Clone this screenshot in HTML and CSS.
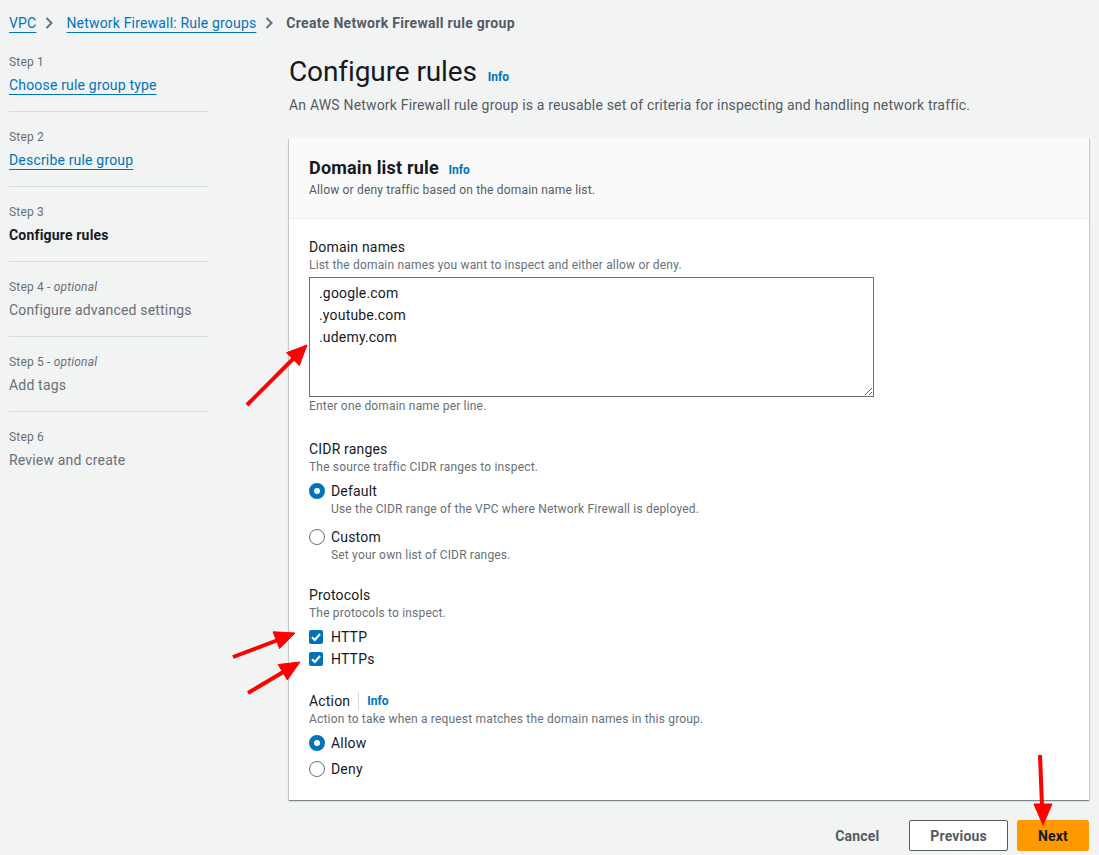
FILE: index.html
```html
<!DOCTYPE html>
<html lang="en">
<head>
<meta charset="utf-8">
<title>Create Network Firewall rule group</title>
<link rel="stylesheet" href="styles.css">
</head>
<body>
<div class="page">
  <nav class="breadcrumbs">
    <a class="crumb-link" href="#">VPC</a>
    <svg class="chev" width="8" height="12" viewBox="0 0 8 12"><polyline points="1.5,1 6.5,6 1.5,11" fill="none" stroke="#687078" stroke-width="2"/></svg>
    <a class="crumb-link" href="#">Network Firewall: Rule groups</a>
    <svg class="chev" width="8" height="12" viewBox="0 0 8 12"><polyline points="1.5,1 6.5,6 1.5,11" fill="none" stroke="#687078" stroke-width="2"/></svg>
    <span class="crumb-current">Create Network Firewall rule group</span>
  </nav>

  <div class="layout">
    <ul class="steps">
      <li class="step">
        <div class="step-label">Step 1</div>
        <a class="step-title link" href="#">Choose rule group type</a>
      </li>
      <li class="step">
        <div class="step-label">Step 2</div>
        <a class="step-title link" href="#">Describe rule group</a>
      </li>
      <li class="step">
        <div class="step-label">Step 3</div>
        <div class="step-title current">Configure rules</div>
      </li>
      <li class="step">
        <div class="step-label">Step 4 - <em>optional</em></div>
        <div class="step-title disabled">Configure advanced settings</div>
      </li>
      <li class="step">
        <div class="step-label">Step 5 - <em>optional</em></div>
        <div class="step-title disabled">Add tags</div>
      </li>
      <li class="step last">
        <div class="step-label">Step 6</div>
        <div class="step-title disabled">Review and create</div>
      </li>
    </ul>

    <main class="main">
      <h1 class="page-title">Configure rules <a class="info" href="#">Info</a></h1>
      <p class="page-desc">An AWS Network Firewall rule group is a reusable set of criteria for inspecting and handling network traffic.</p>

      <section class="container">
        <header class="container-header">
          <h2 class="container-title">Domain list rule <a class="info" href="#">Info</a></h2>
          <div class="container-desc">Allow or deny traffic based on the domain name list.</div>
        </header>
        <div class="container-body">
          <div class="field">
            <div class="field-label">Domain names</div>
            <div class="field-desc">List the domain names you want to inspect and either allow or deny.</div>
            <textarea class="textarea">.google.com
.youtube.com
.udemy.com</textarea>
            <div class="field-hint">Enter one domain name per line.</div>
          </div>

          <div class="field">
            <div class="field-label">CIDR ranges</div>
            <div class="field-desc">The source traffic CIDR ranges to inspect.</div>
            <div class="options">
              <div class="option">
                <span class="radio checked"></span>
                <div>
                  <div class="option-label">Default</div>
                  <div class="option-desc">Use the CIDR range of the VPC where Network Firewall is deployed.</div>
                </div>
              </div>
              <div class="option gap-lg">
                <span class="radio"></span>
                <div>
                  <div class="option-label">Custom</div>
                  <div class="option-desc">Set your own list of CIDR ranges.</div>
                </div>
              </div>
            </div>
          </div>

          <div class="field">
            <div class="field-label">Protocols</div>
            <div class="field-desc">The protocols to inspect.</div>
            <div class="options">
              <div class="option check-option">
                <span class="checkbox"><svg width="14" height="14" viewBox="0 0 14 14"><polyline points="3,7.2 5.8,10 11,4" fill="none" stroke="#fff" stroke-width="2"/></svg></span>
                <div class="option-label">HTTP</div>
              </div>
              <div class="option check-option gap-sm">
                <span class="checkbox"><svg width="14" height="14" viewBox="0 0 14 14"><polyline points="3,7.2 5.8,10 11,4" fill="none" stroke="#fff" stroke-width="2"/></svg></span>
                <div class="option-label">HTTPs</div>
              </div>
            </div>
          </div>

          <div class="field">
            <div class="field-label">Action <span class="label-divider"></span><a class="info" href="#">Info</a></div>
            <div class="field-desc">Action to take when a request matches the domain names in this group.</div>
            <div class="options">
              <div class="option">
                <span class="radio checked"></span>
                <div class="option-label">Allow</div>
              </div>
              <div class="option gap-md">
                <span class="radio"></span>
                <div class="option-label">Deny</div>
              </div>
            </div>
          </div>
        </div>
      </section>

      <div class="actions">
        <button class="btn btn-link">Cancel</button>
        <button class="btn btn-normal">Previous</button>
        <button class="btn btn-primary">Next</button>
      </div>
    </main>
  </div>
</div>

<svg class="annotations" width="1099" height="855" viewBox="0 0 1099 855">
  <g fill="#ff0000" stroke="#ff0000">
    <line x1="247" y1="405" x2="294" y2="358" stroke-width="4"/>
    <polygon points="307,345 299.3,365.5 286.5,352.7" stroke-width="1"/>
    <line x1="233" y1="657" x2="278" y2="640" stroke-width="4"/>
    <polygon points="295,633 279.6,648.6 273.1,631.8" stroke-width="1"/>
    <line x1="248" y1="693" x2="285" y2="671" stroke-width="4"/>
    <polygon points="300,662 287.4,679.9 278.2,664.5" stroke-width="1"/>
    <line x1="1040" y1="755" x2="1042" y2="806" stroke-width="4"/>
    <polygon points="1043,825 1052,804 1034,804" stroke-width="1"/>
  </g>
</svg>
</body>
</html>
```

FILE: styles.css
```css
* { box-sizing: border-box; }

html, body {
  margin: 0;
  padding: 0;
  background: #f2f3f3;
  font-family: Roboto, "Liberation Sans", Arial, sans-serif;
  color: #16191f;
  font-size: 14px;
  letter-spacing: 0.18px;
}

.page {
  position: relative;
  width: 1099px;
  height: 855px;
  padding: 0 10px 0 9px;
  overflow: hidden;
}

.breadcrumbs {
  display: flex;
  align-items: center;
  height: 46px;
  padding-bottom: 1px;
  font-size: 14px;
}

.crumb-link {
  color: #0073bb;
  text-decoration: underline;
  text-underline-offset: 4px;
}

.chev {
  margin: 0 13px 0 9px;
}

.crumb-current {
  color: #545b64;
  font-weight: 700;
  letter-spacing: 0.3px;
}

.layout {
  display: grid;
  grid-template-columns: 200px 800px;
  column-gap: 80px;
  padding-top: 8px;
}

.steps {
  list-style: none;
  margin: 0;
  padding: 0;
}

.step {
  padding: 17px 0 15px;
  border-bottom: 1px solid #d5dbdb;
}

.step:first-child { padding-top: 0; }
.step.last { border-bottom: none; }

.step-label {
  font-size: 12px;
  line-height: 16px;
  color: #687078;
}

.step-label em { font-style: italic; }

.step-title {
  display: block;
  width: max-content;
  margin-top: 4px;
  font-size: 14px;
  line-height: 22px;
}

.step-title.link {
  color: #0073bb;
  text-decoration: underline;
  text-underline-offset: 4px;
}

.step-title.current {
  font-weight: 700;
  color: #16191f;
}

.step-title.disabled { color: #687078; }

.main { min-width: 0; }

.page-title {
  margin: 0;
  height: 36px;
  font-size: 28px;
  line-height: 36px;
  font-weight: 400;
  color: #16191f;
  letter-spacing: -0.1px;
}

.info {
  display: inline-block;
  color: #0073bb;
  font-size: 12px;
  line-height: 16px;
  font-weight: 700;
  text-decoration: none;
  letter-spacing: 0;
}

.page-title .info { margin-left: 4px; }

.page-desc {
  margin: 5px 0 0;
  font-size: 14px;
  line-height: 20px;
  color: #545b64;
}

.container {
  margin-top: 23px;
  background: #fff;
  box-shadow: 0 1px 1px 0 rgba(0,28,36,.3), 1px 1px 1px 0 rgba(0,28,36,.15), -1px 1px 1px 0 rgba(0,28,36,.15);
}

.container-header {
  background: #fafafa;
  border-bottom: 1px solid #eaeded;
  padding: 18px 20px 20px;
}

.container-title {
  margin: 0;
  height: 24px;
  font-size: 18px;
  line-height: 24px;
  font-weight: 700;
}

.container-title .info { margin-left: 5px; }

.container-desc {
  margin-top: 2px;
  font-size: 12px;
  line-height: 16px;
  color: #545b64;
}

.container-body {
  padding: 18px 20px 21px;
  display: flex;
  flex-direction: column;
  gap: 22px;
}

.field-label {
  display: flex;
  align-items: center;
  font-size: 14px;
  line-height: 20px;
  color: #16191f;
}

.label-divider {
  display: inline-block;
  width: 1px;
  height: 18px;
  background: #d5dbdb;
  margin: 0 8px 0 8px;
}

.field-desc {
  font-size: 12px;
  line-height: 16px;
  color: #687078;
}

.textarea {
  display: block;
  margin-top: 4px;
  width: 565px;
  height: 120px;
  border: 1px solid #687078;
  border-radius: 0;
  padding: 4px 9px;
  font-family: Roboto, "Liberation Sans", Arial, sans-serif;
  font-size: 14px;
  line-height: 22px;
  letter-spacing: 0.18px;
  color: #16191f;
  resize: vertical;
  background: #fff;
}

.field-hint {
  margin-top: 1px;
  margin-bottom: 3px;
  font-size: 12px;
  line-height: 16px;
  color: #687078;
}

.options {
  margin-top: 6px;
}

.option {
  display: flex;
  align-items: flex-start;
}

.option.gap-lg { margin-top: 10px; }
.option.gap-md { margin-top: 6px; }
.option.gap-sm { margin-top: 2px; }

.option-label {
  font-size: 14px;
  line-height: 20px;
  color: #16191f;
}

.option-desc {
  font-size: 12px;
  line-height: 16px;
  color: #687078;
}

.radio {
  flex: none;
  width: 16px;
  height: 16px;
  margin: 2px 6px 0 0;
  border-radius: 50%;
  border: 1.5px solid #687078;
  background: #fff;
}

.radio.checked {
  border: 5px solid #0073bb;
  background: #fff;
}

.check-option { align-items: center; }

.checkbox {
  flex: none;
  display: flex;
  width: 14px;
  height: 14px;
  margin-right: 8px;
  border-radius: 2px;
  background: #0073bb;
}

.actions {
  display: flex;
  justify-content: flex-end;
  align-items: center;
  margin-top: 20px;
  gap: 9px;
}

.btn {
  font-family: Roboto, "Liberation Sans", Arial, sans-serif;
  font-size: 14px;
  font-weight: 700;
  line-height: 20px;
  letter-spacing: 0.18px;
  height: 31px;
  padding: 4px 20px;
  border-radius: 2px;
  cursor: pointer;
}

.btn-link {
  background: transparent;
  border: 1px solid transparent;
  color: #545b64;
}

.btn-normal {
  background: #fff;
  border: 1px solid #545b64;
  color: #545b64;
}

.btn-primary {
  background: #ff9900;
  border: 1px solid #ff9900;
  color: #16191f;
}

.annotations {
  position: absolute;
  top: 0;
  left: 0;
  pointer-events: none;
}
```
